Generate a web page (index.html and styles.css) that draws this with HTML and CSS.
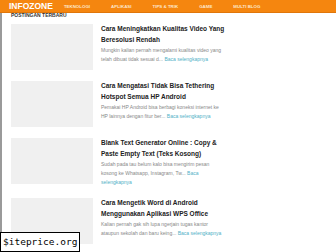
FILE: index.html
```html
<!DOCTYPE html>
<html lang="id">
<head>
<meta charset="utf-8">
<title>Infozone</title>
<link rel="stylesheet" href="styles.css">
</head>
<body>
<header class="topbar">
  <div class="logo">INFOZONE</div>
  <nav class="menu">
    <a href="#">TEKNOLOGI</a>
    <a href="#">APLIKASI</a>
    <a href="#">TIPS &amp; TRIK</a>
    <a href="#">GAME</a>
    <a href="#">MULTI BLOG</a>
  </nav>
</header>
<main class="page">
  <h2 class="section-title">POSTINGAN TERBARU</h2>
  <article class="post">
    <div class="thumb"></div>
    <div class="post-body">
      <h3 class="post-title">Cara Meningkatkan Kualitas Video Yang Beresolusi Rendah</h3>
      <p class="snippet">Mungkin kalian pernah mengalami kualitas video yang telah dibuat tidak sesuai d... <a href="#">Baca selengkapnya</a></p>
    </div>
  </article>
  <article class="post">
    <div class="thumb"></div>
    <div class="post-body">
      <h3 class="post-title">Cara Mengatasi Tidak Bisa Tethering Hotspot Semua HP Android</h3>
      <p class="snippet">Pemakai HP Android bisa berbagi koneksi internet ke HP lainnya dengan fitur ber... <a href="#">Baca selengkapnya</a></p>
    </div>
  </article>
  <article class="post">
    <div class="thumb"></div>
    <div class="post-body">
      <h3 class="post-title">Blank Text Generator Online : Copy &amp; Paste Empty Text (Teks Kosong)</h3>
      <p class="snippet">Sudah pada tau belum kalo bisa mengirim pesan kosong ke Whatsapp, Instagram, Tw... <a href="#">Baca selengkapnya</a></p>
    </div>
  </article>
  <article class="post">
    <div class="thumb"></div>
    <div class="post-body">
      <h3 class="post-title">Cara Mengetik Word di Android Menggunakan Aplikasi WPS Office</h3>
      <p class="snippet">Kalian pernah gak sih lupa ngerjain tugas kantor ataupun sekolah dan baru keing... <a href="#">Baca selengkapnya</a></p>
    </div>
  </article>
</main>
<div class="watermark">$iteprice.org</div>
</body>
</html>
```

FILE: styles.css
```css
html, body {
  margin: 0;
  padding: 0;
  background: #ffffff;
  font-family: "Liberation Sans", Arial, sans-serif;
  width: 336px;
  height: 252px;
  overflow: hidden;
}

.topbar {
  height: 13px;
  background: #f5860f;
  border-bottom: 1px solid #e0760a;
  display: flex;
  align-items: center;
  padding-left: 9px;
  box-sizing: border-box;
}

.logo {
  color: #ffffff;
  font-weight: bold;
  font-size: 8.5px;
  line-height: 1;
  margin-right: 6px;
}

.menu {
  display: flex;
  gap: 11px;
}

.menu a {
  color: #fde6cc;
  font-weight: bold;
  font-size: 4.4px;
  text-decoration: none;
  padding: 0 5px;
}

.page {
  border-left: 2px solid #9a9a9a;
  padding: 0 0 0 9px;
  min-height: 240px;
}

.section-title {
  margin: 0;
  font-size: 5px;
  line-height: 5px;
  color: #333;
  font-weight: bold;
  height: 11px;
}

.post {
  display: flex;
  gap: 8px;
  margin-bottom: 11px;
}

.thumb {
  flex: none;
  width: 82px;
  height: 46px;
  background: #f0f0f0;
}

.post-body {
  width: 124px;
}

.post-title {
  margin: 0;
  font-size: 6.5px;
  line-height: 10.5px;
  color: #222;
  font-weight: bold;
}

.snippet {
  margin: 1px 0 0;
  font-size: 5px;
  line-height: 9px;
  color: #888;
}

.snippet a {
  color: #4fb0c6;
  text-decoration: none;
}

.watermark {
  position: absolute;
  left: 0;
  top: 232px;
  padding: 0 2px;
  background: #fff;
  border: 1px solid #000;
  font-family: "DejaVu Sans Mono", monospace;
  font-size: 9.5px;
  line-height: 18px;
  color: #000;
}
```
